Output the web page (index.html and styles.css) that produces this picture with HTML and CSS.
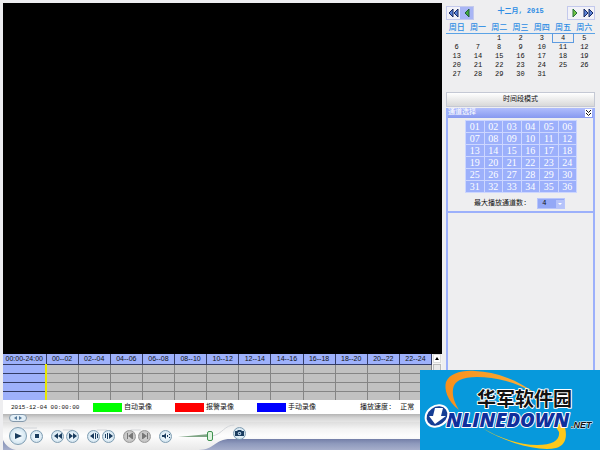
FILE: index.html
```html
<!DOCTYPE html>
<html lang="zh-CN">
<head>
<meta charset="utf-8">
<title>录像回放</title>
<link rel="stylesheet" href="styles.css">
</head>
<body>
<div class="app">
  <main class="player">
    <div class="video"></div>
    <div class="timeline">
      <table class="tracks">
        <thead><tr><th class="total">00:00-24:00</th><th>00--02</th><th>02--04</th><th>04--06</th><th>06--08</th><th>08--10</th><th>10--12</th><th>12--14</th><th>14--16</th><th>16--18</th><th>18--20</th><th>20--22</th><th>22--24</th></tr></thead>
        <tbody>
          <tr><th></th><td></td><td></td><td></td><td></td><td></td><td></td><td></td><td></td><td></td><td></td><td></td><td></td></tr>
          <tr><th></th><td></td><td></td><td></td><td></td><td></td><td></td><td></td><td></td><td></td><td></td><td></td><td></td></tr>
          <tr><th></th><td></td><td></td><td></td><td></td><td></td><td></td><td></td><td></td><td></td><td></td><td></td><td></td></tr>
          <tr><th></th><td></td><td></td><td></td><td></td><td></td><td></td><td></td><td></td><td></td><td></td><td></td><td></td></tr>
        </tbody>
      </table>
      <div class="scrollbar">
        <button class="scroll-up" aria-label="向上"><svg width="4" height="3" viewBox="0 0 4 3"><path d="M0 3 2 0 4 3z"/></svg></button>
        <div class="thumb"></div>
      </div>
    </div>
    <div class="status">
      <span class="clock">2015-12-04 00:00:00</span>
      <span class="key"><i class="swatch auto"></i>自动录像</span>
      <span class="key"><i class="swatch alarm"></i>报警录像</span>
      <span class="key"><i class="swatch manual"></i>手动录像</span>
      <span class="speed"><span>播放速度:</span><span>正常</span></span>
    </div>
    <div class="seek"><button class="seek-thumb" aria-label="播放进度"><svg width="10" height="4" viewBox="0 0 10 4"><path d="M1 2 4 0V4zM9 2 6 0V4z"/></svg></button></div>
    <div class="controls">
      <svg class="backdrop" viewBox="0 0 440 29" preserveAspectRatio="xMinYMin slice" aria-hidden="true">
        <defs>
          <linearGradient id="base" x2="0" y2="1"><stop offset="0" stop-color="#747fa8"/><stop offset=".4" stop-color="#8f9abd"/><stop offset="1" stop-color="#a9b1cd"/></linearGradient>
          <linearGradient id="shell" x2="0" y2="1"><stop offset="0" stop-color="#dedede"/><stop offset=".25" stop-color="#f4f4f4"/><stop offset=".5" stop-color="#fdfdfd"/><stop offset="1" stop-color="#e9e9e9"/></linearGradient>
        </defs>
        <path fill="url(#base)" d="M0 17h440v12H0z"/>
        <path fill="url(#shell)" d="M0 0H440V17H228C212 17 212 28 196 28H13C7 27 2 23 0 18z"/>
        <path fill="none" stroke="#d2d5d9" d="M20 6h14M60 8h10M94 8h10M128 8h10M210 14c10-2 12-11 22-11"/>
      </svg>
      <button class="round large" aria-label="播放"><svg width="8" height="8" viewBox="0 0 8 8"><path d="M1 1 8 4 1 7z"/></svg></button>
      <button class="round" aria-label="停止"><svg width="8" height="8" viewBox="0 0 8 8"><path d="M2 2h4v4H2z"/></svg></button>
      <button class="round pair" aria-label="快退"><svg width="8" height="8" viewBox="0 0 8 8"><path d="M0 4 4 1V7zM4 4 8 1V7z"/></svg></button>
      <button class="round" aria-label="快进"><svg width="8" height="8" viewBox="0 0 8 8"><path d="M8 4 4 1V7zM4 4 0 1V7z"/></svg></button>
      <button class="round pair" aria-label="上一帧"><svg width="8" height="8" viewBox="0 0 8 8"><path d="M0 4 4 1V7zM5 1h1v6H5zM7 2h1v4H7z"/></svg></button>
      <button class="round" aria-label="下一帧"><svg width="8" height="8" viewBox="0 0 8 8"><path d="M8 4 4 1V7zM2 1h1v6H2zM0 2h1v4H0z"/></svg></button>
      <button class="round pair off" aria-label="上一段" disabled><svg width="8" height="8" viewBox="0 0 8 8"><path d="M1 1h1v6H1zM2 4 6 1V7zM6 1h1v6H6z"/></svg></button>
      <button class="round" aria-label="下一段" disabled><svg width="8" height="8" viewBox="0 0 8 8"><path d="M1 1h1v6H1zM6 4 2 1V7zM6 1h1v6H6z"/></svg></button>
      <button class="round speaker" aria-label="静音"><svg width="8" height="8" viewBox="0 0 8 8"><path d="M0 3h2l2-2v6L2 5H0zM5 3h1v2H5zM7 2h1v1H7zM7 5h1v1H7z"/></svg></button>
      <label class="volume"><svg width="38" height="11" viewBox="0 0 38 11" aria-hidden="true"><path fill="#7fa585" d="M0 6 31 3v3z"/></svg><input type="range" min="0" max="100" value="90" aria-label="音量"></label>
      <button class="round snap" aria-label="抓图"><svg width="9" height="8" viewBox="0 0 9 8"><path d="M0 2h2l1-1h3l1 1h2v5H0z"/><circle cx="4.5" cy="4.5" r="1.7" fill="#c5dcef"/><circle cx="4.5" cy="4.5" r=".8"/></svg></button>
    </div>
  </main>
  <aside class="side">
    <div class="month">
      <div class="nav"><button aria-label="上一年"><svg width="12" height="10" viewBox="0 0 12 10"><path d="M1 5 5 1V9zM6 5 10 1V9z" fill="#5b83d8" stroke="#17285f"/></svg></button><button class="current" aria-label="上一月"><svg width="8" height="10" viewBox="0 0 8 10"><path d="M2 5 6 1V9z" fill="#43ac3c" stroke="#205d3b"/></svg></button></div>
      <span class="month-name">十二月, 2015</span>
      <div class="nav"><button aria-label="下一月"><svg width="8" height="10" viewBox="0 0 8 10"><path d="M6 5 2 1V9z" fill="#70c443" stroke="#26713b"/></svg></button><button aria-label="下一年"><svg width="12" height="10" viewBox="0 0 12 10"><path d="M11 5 7 1V9zM6 5 2 1V9z" fill="#5b83d8" stroke="#17285f"/></svg></button></div>
    </div>
    <table class="calendar">
      <thead><tr><th>周日</th><th>周一</th><th>周二</th><th>周三</th><th>周四</th><th>周五</th><th>周六</th></tr></thead>
      <tbody>
        <tr><td></td><td></td><td>1</td><td>2</td><td>3</td><td class="today">4</td><td>5</td></tr>
        <tr><td>6</td><td>7</td><td>8</td><td>9</td><td>10</td><td>11</td><td>12</td></tr>
        <tr><td>13</td><td>14</td><td>15</td><td>16</td><td>17</td><td>18</td><td>19</td></tr>
        <tr><td>20</td><td>21</td><td>22</td><td>23</td><td>24</td><td>25</td><td>26</td></tr>
        <tr><td>27</td><td>28</td><td>29</td><td>30</td><td>31</td><td></td><td></td></tr>
      </tbody>
    </table>
    <button class="mode">时间段模式</button>
    <section class="channels">
      <h2 class="bar"><span>通道选择</span><button class="fold" aria-label="折叠"><svg width="5" height="6" viewBox="0 0 5 6"><path d="M0 0 2.5 2.5 5 0M0 3 2.5 5.500 5 3" fill="none" stroke="#111"/></svg></button></h2>
      <div class="grid">
        <button>01</button><button>02</button><button>03</button><button>04</button><button>05</button><button>06</button>
        <button>07</button><button>08</button><button>09</button><button>10</button><button>11</button><button>12</button>
        <button>13</button><button>14</button><button>15</button><button>16</button><button>17</button><button>18</button>
        <button>19</button><button>20</button><button>21</button><button>22</button><button>23</button><button>24</button>
        <button>25</button><button>26</button><button>27</button><button>28</button><button>29</button><button>30</button>
        <button>31</button><button>32</button><button>33</button><button>34</button><button>35</button><button>36</button>
      </div>
      <div class="limit">
        <label for="max">最大播放通道数:</label>
        <span class="picker"><select id="max"><option>1</option><option selected>4</option></select><svg class="arrow" width="8" height="8" viewBox="0 0 8 8"><path fill="#b5c3fa" d="M0 0h8v8H0z"/><path fill="#fff" d="M2 3h4L4 5z"/></svg></span>
      </div>
    </section>
    <section class="list"></section>
  </aside>
</div>
<div class="brand">
  <svg width="180" height="80" viewBox="0 0 180 80" role="img" aria-label="华军软件园 ONLINEDOWN.NET">
    <defs><linearGradient id="ring" x2="1" y2="0"><stop offset="0" stop-color="#f88f1c"/><stop offset="1" stop-color="#fbb03a"/></linearGradient></defs>
    <path fill="url(#ring)" d="M39 40C27 31 24 19 26 12C30 3 42 0 55 1C77 2 98 10 116 24C96 12 76 7 57 7C42 7 34 11 33 19C32 27 35 33 39 40z"/>
    <path fill="#fdc81c" d="M62 58C80 68 99 75 117 75C133 75 140 70 139 62L134 54H144C148 66 146 75 136 78C118 82 84 72 62 58z"/>
    <g class="brand-text">
      <text class="brand-cn" x="57" y="36">华军软件园</text>
      <text class="brand-en" x="26" y="57">NLINEDOWN</text>
      <ellipse cx="17" cy="46" rx="12" ry="10" transform="rotate(-35 17 46)" fill="#153d94" stroke="#fff" stroke-width="2"/>
      <path fill="#fff" d="M15 38h8l-2 8h5L15 54l-6-8h4z"/>
      <text class="brand-net" x="151" y="58">.NET</text>
    </g>
  </svg>
</div>
</body>
</html>
```
FILE: styles.css
```css
* { box-sizing: border-box; }
body { margin: 0; font: 7px/9px "Liberation Mono", "Noto Sans CJK SC", monospace; color: #111; background: #eeeef0; }
button { margin: 0; padding: 0; border: 0; background: none; font: inherit; color: inherit; display: flex; align-items: center; justify-content: center; }
svg { display: block; flex: none; }
table { border-collapse: collapse; table-layout: fixed; width: 100%; }
th, td { padding: 0; }

.app { display: grid; grid-template-columns: 1fr 149px; gap: 4px; min-height: 100vh; padding: 3px 5px 0 3px; }
.player { display: flex; flex-direction: column; min-width: 0; }
.video { flex: 1; background: #000; }

.timeline { display: flex; background: #f4f4f4; }
.tracks { flex: 1; width: auto; font: 7px/9px "Liberation Sans", sans-serif; }
.tracks tr { height: 9px; }
.tracks thead tr { height: 10px; }
.tracks th { background: #9eb1fb; border-right: 1px solid #333c66; border-bottom: 1px solid #333c66; font-weight: 400; }
.tracks .total { width: 43px; }
.tracks td { background: #c1c1c1; border-right: 1px solid #858585; border-bottom: 1px solid #858585; }
.tracks tbody th { border-right: 2px solid #e8e800; }
.tracks tbody tr:last-child > * { border-bottom: 0; }
.scrollbar { width: 10px; padding: 0 1px; }
.scroll-up { width: 8px; height: 9px; background: #fff; border: 1px solid #ddd; }
.thumb { height: 9px; margin-top: 1px; border: 1px solid #bbb; background: #e8e8e8; }

.status { display: flex; align-items: center; height: 14px; padding-left: 8px; background: #fff; white-space: nowrap; }
.clock { width: 82px; font-size: 6px; }
.key { display: flex; align-items: center; gap: 2px; width: 82px; }
.swatch { width: 29px; height: 9px; }
.auto { background: #0f0; }
.alarm { background: #f00; }
.manual { background: #00f; }
.speed { display: flex; gap: 8px; padding-left: 21px; }

.seek { height: 8px; padding-left: 6px; background: linear-gradient(#b4b4b4, #d6d6d6 50%, #e6e6e6); }
.seek-thumb { width: 18px; height: 8px; border: 1px solid #8599ab; border-radius: 4px; background: #e2eef6; fill: #54799b; }

.controls { position: relative; display: flex; align-items: center; height: 28px; padding-left: 6px; overflow: hidden; }
.backdrop { position: absolute; inset: 0; width: 100%; height: 100%; }
.round { position: relative; width: 13px; height: 13px; margin-left: 2px; border: 1px solid #7f9db2; border-radius: 50%; background: radial-gradient(#f4fbff 20%, #bfd7e6); fill: #1b3d5f; }
.large { width: 18px; height: 18px; margin-left: 0; }
.large + .round { margin-left: 3px; }
.round.pair { margin-left: 8px; }
.round:disabled { border-color: #999; background: radial-gradient(#ddd, #b5b5b5); fill: #777; }
.round.speaker { margin-left: 8px; }
.volume { position: relative; display: flex; align-items: center; margin-left: 6px; }
.volume input { position: absolute; inset: 0; width: 100%; height: 100%; margin: 0; appearance: none; background: none; }
.volume input::-webkit-slider-thumb { appearance: none; width: 6px; height: 10px; border: 1px solid #3f9150; border-radius: 2px; background: #dff3df; }
.round.snap { margin: 0 0 6px 17px; }

.side { display: flex; flex-direction: column; }
.month { display: flex; align-items: center; justify-content: space-between; height: 20px; }
.month-name { color: #2c8ce4; font-weight: 700; padding-bottom: 4px; }
.nav { display: flex; height: 14px; border: 1px solid #c3c9ec; background: #f2f2f8; }
.nav button { width: 13px; }
.nav .current { background: #a8b5f5; }
.calendar { text-align: center; }
.calendar tr { height: 9px; }
.calendar thead tr { height: 10px; }
.calendar th { color: #2c8ce4; font-size: 8px; font-weight: 500; border-bottom: 1px solid #5ba3e6; }
.calendar .today { outline: 1px solid #5e9be0; outline-offset: -1px; }
.mode { height: 15px; margin-top: 13px; border: 1px solid #c4c8d4; background: linear-gradient(#fff, #d8d8d8); }

.channels { border: 2px solid #9cb0fb; border-top: 0; margin-top: 1px; }
.bar { display: flex; align-items: center; justify-content: space-between; height: 10px; margin: 0; padding-right: 1px; color: #fff; background: linear-gradient(#b1befc, #8799f0); font: inherit; }
.fold { width: 7px; height: 8px; background: #fff; }
.grid { display: grid; grid-template-columns: repeat(6, 1fr); gap: 1px; padding: 1px; margin: 2px 16px 4px 17px; background: #ccd6ff; }
.grid button { height: 11px; color: #fff; background: #9cb0fb; font: 10px/11px "Liberation Serif", serif; }
.limit { display: flex; align-items: center; gap: 10px; height: 14px; padding-left: 26px; }
.picker { position: relative; display: flex; }
.picker select { width: 28px; height: 11px; padding: 0 0 0 4px; border: 1px solid #b8c5fb; border-radius: 0; appearance: none; color: #111; background: #93a8f6; font: inherit; }
.arrow { position: absolute; right: 1px; top: 2px; pointer-events: none; }
.list { flex: 1; border: 2px solid #9cb0fb; border-top: 0; }

.brand { position: fixed; right: 0; bottom: 0; background: #0799dc; }
.brand-text text { paint-order: stroke; stroke: #fff; stroke-width: 2px; stroke-linejoin: round; }
.brand-text .brand-cn { font: 700 19px "Noto Sans CJK SC", sans-serif; fill: #111; }
.brand-text .brand-en { font: italic 800 20px "Open Sans", sans-serif; fill: #0f2f9c; }
.brand-text .brand-net { font: italic 700 9px "Liberation Sans", sans-serif; fill: #111; stroke-width: 1px; }
```
